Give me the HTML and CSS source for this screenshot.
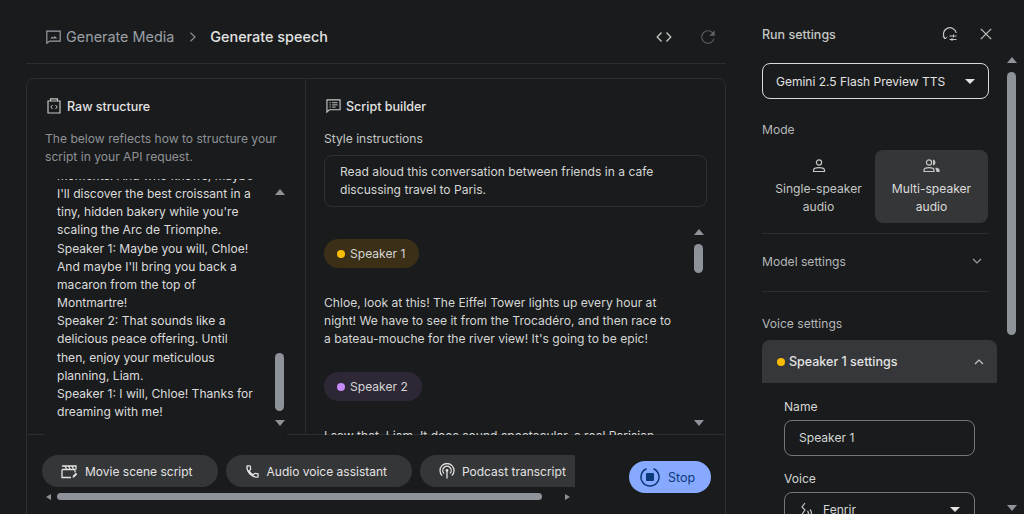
FILE: index.html
```html
<!DOCTYPE html>
<html lang="en">
<head>
    <meta charset="UTF-8">
    <title>Generate speech</title>
    <link rel="stylesheet" href="styles.css">
</head>
<body>
    <div class="main">
        <div class="topbar">
            <svg class="crumb-icon" width="15" height="15" viewBox="0 0 18 18" fill="none" stroke="#9aa0a6" stroke-width="1.4">
                <path d="M1 2.5h16v12H4.5L1 17z"></path>
                <path d="M5 11.5l2.5-2.5 1.5 1.5 1.5-2 3 3z" fill="#9aa0a6" stroke="none"></path>
            </svg>
            <span class="crumb">Generate Media</span>
            <svg class="crumb-sep" width="8" height="10" viewBox="0 0 8 10" fill="none" stroke="#8b8f95" stroke-width="1.2"><path d="M1.5 .8L6 5 1.5 9.2"></path></svg>
            <span class="crumb-current">Generate speech</span>
            <div class="topbar-actions">
                <svg width="16" height="12" viewBox="0 0 16 12" fill="none" stroke="#c4c7c5" stroke-width="1.3"><path d="M5.5 1.5L1.2 6l4.3 4.5M10.5 1.5L14.8 6l-4.3 4.5"></path></svg>
                <svg width="20" height="20" viewBox="0 0 24 24" fill="#5f6368"><path d="M17.65 6.35A7.958 7.958 0 0 0 12 4c-4.42 0-7.99 3.58-7.99 8s3.57 8 7.99 8c3.73 0 6.84-2.55 7.73-6h-1.4A6.7 6.7 0 0 1 12 18.8c-3.7 0-6.8-3.1-6.8-6.8s3.1-6.8 6.8-6.8c1.9 0 3.5.8 4.8 2.1L13.5 10.5H20V4l-2.35 2.35z"></path></svg>
            </div>
        </div>

        <div class="card">
            <div class="columns">
                <div class="raw">
                    <div class="panel-title">
                        <svg width="14" height="16" viewBox="0 0 14 16" fill="none" stroke="#c4c7c5" stroke-width="1.2">
                            <path d="M1 3h12v12H1z"></path>
                            <path d="M3.5 3V.8h7V3"></path>
                            <path d="M5.5 7L3.8 9l1.7 2M8.5 7l1.7 2-1.7 2" stroke-width="1"></path>
                        </svg>
                        <span>Raw structure</span>
                    </div>
                    <p class="raw-hint">The below reflects how to structure your script in your API request.</p>
                    <div class="raw-scroll">
                        <div class="raw-text">moments. And who knows, maybe<br>I'll discover the best croissant in a<br>tiny, hidden bakery while you're<br>scaling the Arc de Triomphe.<br>Speaker 1: Maybe you will, Chloe!<br>And maybe I'll bring you back a<br>macaron from the top of<br>Montmartre!<br>Speaker 2: That sounds like a<br>delicious peace offering. Until<br>then, enjoy your meticulous<br>planning, Liam.<br>Speaker 1: I will, Chloe! Thanks for<br>dreaming with me!</div>
                        <div class="scrollbar raw-bar">
                            <span class="arrow-up"></span>
                            <span class="thumb"></span>
                            <span class="arrow-down"></span>
                        </div>
                    </div>
                </div>

                <div class="builder">
                    <div class="panel-title">
                        <svg width="15" height="16" viewBox="0 0 16 16" fill="none" stroke="#c4c7c5" stroke-width="1.2">
                            <path d="M1 1.5h14v10.5H3.5L1 14.5z"></path>
                            <path d="M3.8 4.5h1.4M3.8 6.8h1.4M3.8 9.1h1.4M6.5 4.5h5.8M6.5 6.8h5.8M6.5 9.1h3.8" stroke-width="1"></path>
                        </svg>
                        <span>Script builder</span>
                    </div>
                    <div class="style-label">Style instructions</div>
                    <div class="style-box">Read aloud this conversation between friends in a cafe discussing travel to Paris.</div>
                    <div class="dialogue">
                        <div class="dialogue-inner">
                            <div class="speaker speaker-one"><span class="dot dot-yellow"></span>Speaker 1</div>
                            <p class="line">Chloe, look at this! The Eiffel Tower lights up every hour at night! We have to see it from the Trocadéro, and then race to a bateau-mouche for the river view! It's going to be epic!</p>
                            <div class="speaker speaker-two"><span class="dot dot-purple"></span>Speaker 2</div>
                            <p class="line">I saw that, Liam. It does sound spectacular, a real Parisian</p>
                        </div>
                        <div class="scrollbar builder-bar">
                            <span class="arrow-up"></span>
                            <span class="thumb"></span>
                            <span class="arrow-down"></span>
                        </div>
                    </div>
                </div>
            </div>

            <div class="card-footer">
                <div class="chips-wrap">
                    <div class="chips">
                        <div class="chip">
                            <svg width="17" height="15" viewBox="0 0 17 15" fill="none" stroke="#e3e3e3" stroke-width="1.3">
                                <path d="M1 5.5v8h9M14 5.5H1M1 2h14v3.5M14 5.5v3"></path>
                                <path d="M4 2l1.5 3M7.5 2l1.5 3M11 2l1.5 3"></path>
                                <path d="M11.5 13.8l.4-2 3-3 1.4 1.4-3 3z" fill="#e3e3e3" stroke="none"></path>
                            </svg>
                            Movie scene script
                        </div>
                        <div class="chip">
                            <svg width="15" height="15" viewBox="0 0 24 24" fill="none" stroke="#e3e3e3" stroke-width="2"><path d="M20 15.5c-1.25 0-2.45-.2-3.57-.57a1.02 1.02 0 0 0-1.02.24l-2.2 2.2a15.045 15.045 0 0 1-6.59-6.58l2.2-2.21a.96.96 0 0 0 .25-1A11.36 11.36 0 0 1 8.5 4c0-.55-.45-1-1-1H4c-.55 0-1 .45-1 1 0 9.39 7.61 17 17 17 .55 0 1-.45 1-1v-3.5c0-.55-.45-1-1-1z"></path></svg>
                            Audio voice assistant
                        </div>
                        <div class="chip">
                            <svg width="16" height="16" viewBox="0 0 16 16" fill="none" stroke="#e3e3e3" stroke-width="1.3">
                                <path d="M3.2 12.6a7 7 0 1 1 9.6 0"></path>
                                <path d="M5 10.4a4.2 4.2 0 1 1 6 0"></path>
                                <circle cx="8" cy="7.5" r="1.4" fill="#e3e3e3" stroke="none"></circle>
                                <path d="M8 8.5v7"></path>
                            </svg>
                            Podcast transcript
                        </div>
                    </div>
                    <div class="h-scrollbar">
                        <span class="arrow-left"></span>
                        <span class="h-thumb"></span>
                        <span class="arrow-right"></span>
                    </div>
                </div>
                <div class="stop-btn">
                    <svg width="22" height="22" viewBox="0 0 22 22" fill="none">
                        <path d="M7.5 2.7A9 9 0 1 0 14.5 2.7" stroke="#0b3a7a" stroke-width="1.5"></path>
                        <rect x="7" y="7" width="8" height="8" rx="1" fill="#0b3a7a"></rect>
                    </svg>
                    Stop
                </div>
            </div>
        </div>
    </div>

    <div class="settings">
        <div class="settings-head">
            <span class="settings-title">Run settings</span>
            <div class="settings-actions">
                <svg width="16" height="16" viewBox="0 0 16 16" fill="none" stroke="#c4c7c5" stroke-width="1.2">
                    <path d="M3 12.5A6.5 6.5 0 1 1 14.3 7"></path>
                    <path d="M1 10.5l2 2.5 2.3-2" stroke-width="1"></path>
                    <path d="M7.5 10h7M7.5 13.5h7" stroke-width="1"></path>
                    <path d="M11.5 8.5v3M10 12v3" stroke-width="1"></path>
                </svg>
                <svg width="12" height="12" viewBox="0 0 12 12" fill="none" stroke="#c4c7c5" stroke-width="1.2"><path d="M.8 .8l10.4 10.4M11.2 .8L.8 11.2"></path></svg>
            </div>
        </div>
        <div class="model-select">
            <span>Gemini 2.5 Flash Preview TTS</span>
            <span class="caret"></span>
        </div>
        <div class="section-label mode-label">Mode</div>
        <div class="modes">
            <div class="mode">
                <svg width="14" height="14" viewBox="0 0 14 14" fill="none" stroke="#c4c7c5" stroke-width="1.2">
                    <circle cx="7" cy="3.5" r="2.6"></circle>
                    <path d="M1.5 12.5v-1.2c0-1.5 2.5-2.6 5.5-2.6s5.5 1.1 5.5 2.6v1.2z"></path>
                </svg>
                <span>Single-speaker audio</span>
            </div>
            <div class="mode mode-active">
                <svg width="17" height="14" viewBox="0 0 17 14" fill="none" stroke="#c4c7c5" stroke-width="1.2">
                    <circle cx="6" cy="3.5" r="2.6"></circle>
                    <path d="M1 12.5v-1.2c0-1.5 2.2-2.6 5-2.6s5 1.1 5 2.6v1.2z"></path>
                    <path d="M10 1a2.6 2.6 0 0 1 0 5" fill="#c4c7c5"></path>
                    <path d="M12.5 9c2 .3 3.5 1.2 3.5 2.3v1.2h-2.5" fill="#c4c7c5"></path>
                </svg>
                <span>Multi-speaker audio</span>
            </div>
        </div>
        <div class="model-settings">
            <span>Model settings</span>
            <svg class="chev" width="10" height="7" viewBox="0 0 10 7" fill="none" stroke="#9aa0a6" stroke-width="1.2"><path d="M1 1l4 4 4-4"></path></svg>
        </div>
        <div class="section-label voice-label">Voice settings</div>
        <div class="speaker-settings">
            <div class="speaker-head">
                <span class="dot dot-yellow"></span>
                <span class="speaker-name">Speaker 1 settings</span>
                <svg class="chev" width="10" height="7" viewBox="0 0 10 7" fill="none" stroke="#c4c7c5" stroke-width="1.2"><path d="M1 6l4-4 4 4"></path></svg>
            </div>
            <div class="speaker-body">
                <div class="field-label">Name</div>
                <div class="field">Speaker 1</div>
                <div class="field-label">Voice</div>
                <div class="field field-voice">
                    <svg width="14" height="16" viewBox="0 0 14 16" fill="none" stroke="#c4c7c5" stroke-width="1.2">
                        <path d="M6 1L3 5l3 3-2.5 3.5L5 15"></path>
                        <path d="M8.5 9a3 3 0 0 1 0 4M11 7.5a5.5 5.5 0 0 1 0 7"></path>
                    </svg>
                    <span>Fenrir</span>
                    <span class="caret"></span>
                </div>
            </div>
        </div>
        <div class="scrollbar settings-bar">
            <span class="arrow-up"></span>
            <span class="thumb"></span>
            <span class="arrow-down"></span>
        </div>
    </div>
</body>
</html>
```

FILE: styles.css
```css
* {
    box-sizing: border-box;
}
html, body {
    height: 514px;
    overflow: hidden;
}
body {
    margin: 0;
    display: flex;
    background-color: #1a1b1c;
    color: #c4c7c5;
    font-family: Inter, "Noto Sans", sans-serif;
    font-size: 12.1px;
}
.main {
    width: 740px;
    padding: 0 14px 0 26px;
    flex-shrink: 0;
}
.topbar {
    height: 64px;
    display: flex;
    align-items: center;
    padding: 10px 0 0 20px;
    border-bottom: 1px solid #2c2d2f;
    margin-bottom: 14px;
}
.crumb-icon {
    margin-right: 5px;
}
.crumb {
    font-size: 14.4px;
    color: #9aa0a6;
}
.crumb-sep {
    margin: 0 13px 0 15px;
}
.crumb-current {
    font-size: 14.4px;
    font-weight: 500;
    color: #e3e3e3;
}
.topbar-actions {
    margin-left: auto;
    display: flex;
    align-items: center;
    gap: 26px;
    padding-right: 8px;
}
.card {
    height: 460px;
    border: 1px solid #2c2d2f;
    border-radius: 8px;
}
.columns {
    height: 356px;
    display: flex;
    border-bottom: 1px solid #2c2d2f;
}
.raw {
    width: 279px;
    padding: 18px 0 0 18px;
    border-right: 1px solid #2c2d2f;
}
.panel-title {
    display: flex;
    align-items: center;
    gap: 6px;
    height: 18px;
    padding-left: 2px;
    font-size: 12.5px;
    font-weight: 500;
    color: #e3e3e3;
}
.builder .panel-title {
    gap: 5px;
}
.raw-hint {
    margin: 15px 12px 0 0;
    line-height: 18px;
    color: #8e9297;
}
.raw-scroll {
    position: relative;
    width: 242px;
    height: 257px;
    margin-top: 13px;
    overflow: hidden;
    background-color: #1a1b1c;
}
.raw-text {
    margin-top: -12px;
    padding-left: 12px;
    line-height: 18.15px;
    color: #dcdcdc;
    white-space: nowrap;
}
.builder {
    flex: 1;
    min-width: 0;
    padding: 18px 0 0 18px;
}
.style-label {
    margin-top: 15px;
    line-height: 18px;
    color: #c4c7c5;
}
.style-box {
    width: 383px;
    height: 52px;
    margin-top: 7px;
    padding: 7px 15px;
    border: 1px solid #2f3032;
    border-radius: 8px;
    line-height: 18px;
    color: #d4d6d5;
}
.dialogue {
    position: relative;
    height: 228px;
    overflow: hidden;
}
.dialogue-inner {
    width: 350px;
    padding-top: 32px;
}
.speaker {
    display: inline-flex;
    align-items: center;
    gap: 5px;
    height: 29px;
    padding: 0 14px 0 13px;
    border-radius: 15px;
    color: #d4d6d5;
}
.speaker-one {
    background-color: #3b2f17;
}
.speaker-two {
    background-color: #2e2836;
}
.dot {
    display: inline-block;
    width: 8px;
    height: 8px;
    border-radius: 50%;
    flex-shrink: 0;
}
.dot-yellow {
    background-color: #fbbc04;
}
.dot-purple {
    background-color: #c58af9;
}
.line {
    margin: 26px 0 24px;
    line-height: 18px;
    color: #d4d6d5;
}
.scrollbar {
    position: absolute;
    width: 9px;
    display: flex;
    flex-direction: column;
    align-items: center;
}
.scrollbar .thumb {
    width: 9px;
    background-color: #8e9299;
    border-radius: 5px;
}
.arrow-up, .arrow-down {
    width: 0;
    height: 0;
    border-left: 5px solid transparent;
    border-right: 5px solid transparent;
}
.arrow-up {
    border-bottom: 6px solid #8e9299;
}
.arrow-down {
    border-top: 6px solid #8e9299;
    margin-top: auto;
}
.raw-bar {
    left: 230px;
    top: 10px;
    height: 237px;
}
.raw-bar .thumb {
    height: 58px;
    margin-top: auto;
}
.raw-bar .arrow-down {
    margin-top: 9px;
}
.builder-bar {
    left: 370px;
    top: 22px;
    height: 197px;
}
.builder-bar .thumb {
    height: 29px;
    margin-top: 9px;
}
.card-footer {
    display: flex;
    padding: 20px 0 0 15px;
}
.chips-wrap {
    width: 533px;
    overflow: hidden;
}
.chips {
    display: flex;
    gap: 8px;
    width: 533px;
    overflow: hidden;
}
.chip {
    display: flex;
    align-items: center;
    gap: 7px;
    height: 32px;
    padding: 0 25px 0 19px;
    border-radius: 16px;
    background-color: #353638;
    color: #e3e3e3;
    font-size: 12px;
    white-space: nowrap;
    flex-shrink: 0;
}
.h-scrollbar {
    display: flex;
    align-items: center;
    height: 7px;
    margin-top: 6px;
    padding-left: 4px;
}
.h-thumb {
    width: 485px;
    height: 7px;
    margin-left: 6px;
    border-radius: 4px;
    background-color: #8e9299;
}
.arrow-left, .arrow-right {
    width: 0;
    height: 0;
    border-top: 3px solid transparent;
    border-bottom: 3px solid transparent;
}
.arrow-left {
    border-right: 5px solid #8e9299;
}
.arrow-right {
    border-left: 5px solid #8e9299;
    margin-left: 23px;
}
.stop-btn {
    display: flex;
    align-items: center;
    gap: 7px;
    height: 32px;
    margin: 6px 0 0 54px;
    padding: 0 16px 0 10px;
    border-radius: 16px;
    background-color: #87a9ff;
    color: #0b3a7a;
    font-size: 12.5px;
}
.settings {
    position: relative;
    flex: 1;
    padding: 0 35px 0 22px;
}
.settings-head {
    display: flex;
    align-items: center;
    height: 24px;
    margin-top: 22px;
}
.settings-title {
    font-size: 12.5px;
    font-weight: 500;
    color: #c4c7c5;
}
.settings-actions {
    margin-left: auto;
    margin-right: 5px;
    display: flex;
    align-items: center;
    gap: 22px;
}
.model-select {
    display: flex;
    align-items: center;
    justify-content: space-between;
    height: 36px;
    margin-top: 17px;
    padding: 0 13px;
    width: 227px;
    border: 1px solid #d9dadb;
    border-radius: 8px;
    color: #e3e3e3;
    font-size: 12px;
}
.caret {
    width: 0;
    height: 0;
    border-left: 5px solid transparent;
    border-right: 5px solid transparent;
    border-top: 5px solid #e3e3e3;
}
.section-label {
    line-height: 18px;
    color: #b4b7b8;
}
.mode-label {
    margin-top: 22px;
}
.modes {
    display: flex;
    width: 227px;
    margin-top: 11px;
    padding-bottom: 10px;
    border-bottom: 1px solid #2c2d2f;
}
.mode {
    width: 113px;
    height: 73px;
    display: flex;
    flex-direction: column;
    align-items: center;
    padding-top: 9px;
    border-radius: 8px;
    text-align: center;
    line-height: 18px;
    color: #c4c7c5;
}
.mode span {
    margin-top: 7px;
    width: 90px;
}
.mode svg {
    height: 14px;
}
.mode-active {
    background-color: #353638;
    color: #dcdcdc;
}
.model-settings {
    display: flex;
    align-items: center;
    justify-content: space-between;
    width: 227px;
    height: 58px;
    padding: 0 7px 3px 0;
    border-bottom: 1px solid #2c2d2f;
    color: #b4b7b8;
}
.voice-label {
    margin-top: 23px;
}
.speaker-settings {
    width: 235px;
    margin-top: 7px;
}
.speaker-head {
    display: flex;
    align-items: center;
    height: 43px;
    padding: 0 13px 0 15px;
    border-radius: 8px 8px 0 0;
    background-color: #36373a;
    font-size: 12.5px;
    font-weight: 500;
    color: #e3e3e3;
}
.speaker-name {
    margin-left: 4px;
}
.speaker-head .chev {
    margin-left: auto;
}
.speaker-body {
    padding: 15px 22px 0 22px;
}
.field-label {
    line-height: 18px;
    color: #d4d6d5;
}
.field {
    display: flex;
    align-items: center;
    height: 36px;
    margin: 4px 0 14px;
    padding: 0 14px 1px;
    border: 1px solid #75777c;
    border-radius: 8px;
    color: #d4d6d5;
}
.field-voice {
    gap: 10px;
}
.field-voice .caret {
    margin-left: auto;
}
.settings-bar {
    left: 267px;
    top: 57px;
    height: 454px;
}
.settings-bar .thumb {
    height: 263px;
    margin-top: 9px;
}
```
